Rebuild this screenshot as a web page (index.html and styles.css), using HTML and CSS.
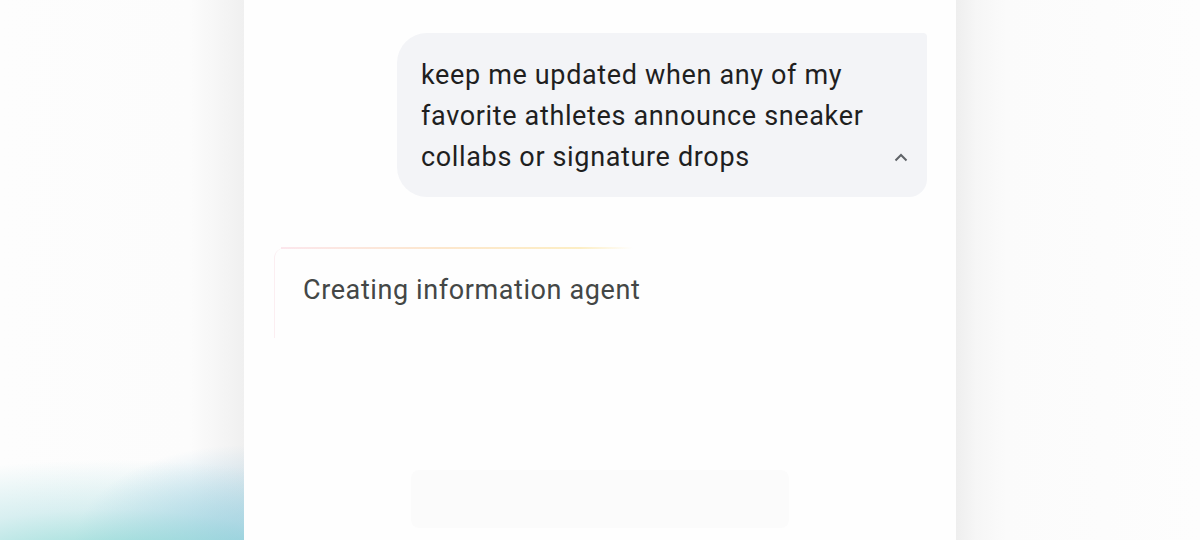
FILE: index.html
```html
<!DOCTYPE html>
<html lang="en">

<head>
    <meta charset="UTF-8">
    <meta name="viewport" content="width=device-width, initial-scale=1.0">
    <title>Information agent</title>
    <link rel="stylesheet" href="styles.css">
</head>

<body>
    <div class="stage">
        <div class="side side-left"></div>

        <div class="phone">
            <div class="chat">
                <div class="bubble">
                    <p>keep me updated when any of my favorite athletes announce sneaker collabs or signature drops</p>
                    <svg class="chevron" width="16" height="16" viewBox="0 0 16 16">
                        <path d="M2.5 10.5 L8 5 L13.5 10.5" fill="none" stroke="#5f6368" stroke-width="2" />
                    </svg>
                </div>

                <div class="agent-card">
                    <div class="glow"></div>
                    <span>Creating information agent</span>
                </div>
            </div>

            <div class="ghost-bar"></div>
        </div>

        <div class="side side-right"></div>
    </div>
</body>

</html>
```

FILE: styles.css
```css
html,
body {
    margin: 0;
    padding: 0;
    background-color: #fdfdfd;
    font-family: Roboto, "Noto Sans", Arial, sans-serif;
}

.stage {
    display: flex;
    width: 1200px;
    height: 540px;
    overflow: hidden;
}

.side {
    width: 244px;
    flex-shrink: 0;
}

.side-left {
    background:
        radial-gradient(ellipse 380px 110px at 110px 570px, rgba(125, 212, 205, 0.9), rgba(160, 218, 222, 0.4) 55%, rgba(255, 255, 255, 0) 100%),
        radial-gradient(ellipse 170px 100px at 244px 545px, rgba(160, 205, 228, 0.95), rgba(255, 255, 255, 0) 100%),
        linear-gradient(to right, #fdfdfd 0, #fcfcfc 190px, #f0f0f0 244px);
}

.side-right {
    background: linear-gradient(to right, #eeeeee 0, #f6f6f6 20px, #fbfbfb 50px, #fdfdfd 100%);
}

.phone {
    width: 712px;
    flex-shrink: 0;
    background-color: #fefefe;
    display: flex;
    flex-direction: column;
    justify-content: space-between;
}

.chat {
    display: flex;
    flex-direction: column;
    padding: 33px 29px 0 30px;
}

.bubble {
    align-self: flex-end;
    width: 530px;
    box-sizing: border-box;
    background-color: #f3f4f7;
    border-radius: 30px 4px 18px 30px;
    padding: 22px 18px 19px 24px;
    display: flex;
    align-items: flex-end;
    justify-content: space-between;
}

.bubble p {
    margin: 0;
    width: 470px;
    font-size: 27px;
    line-height: 41px;
    letter-spacing: 0.65px;
    color: #1f1f1f;
}

.chevron {
    margin-bottom: 12px;
}

.agent-card {
    margin-top: 51px;
    width: 400px;
    height: 90px;
    box-sizing: border-box;
    border-left: 1px solid #fbeef1;
    border-top-left-radius: 10px;
    padding: 26px 0 0 28px;
    position: relative;
}

.agent-card .glow {
    position: absolute;
    top: -1px;
    left: 6px;
    width: 352px;
    height: 2px;
    background: linear-gradient(to right, rgba(250, 215, 225, 0.6), rgba(252, 228, 200, 0.9) 45%, rgba(252, 236, 190, 0.9) 85%, rgba(255, 255, 255, 0));
}

.agent-card span {
    font-size: 27px;
    letter-spacing: 0.6px;
    color: #444746;
}

.ghost-bar {
    align-self: center;
    width: 378px;
    height: 58px;
    margin-bottom: 12px;
    background-color: #fbfbfb;
    border-radius: 8px;
}
```
